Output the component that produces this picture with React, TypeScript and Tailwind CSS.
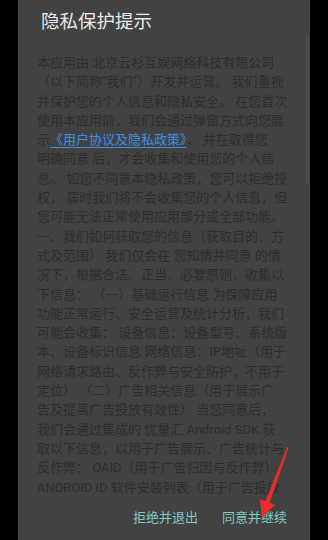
import React from 'react';

const lines: React.ReactNode[] = [
  '本应用由 北京云杉互娱网络科技有限公司',
  '（以下简称“我们”）开发并运营。 我们重视',
  '并保护您的个人信息和隐私安全。 在您首次',
  '使用本应用前，我们会通过弹窗方式向您展',
  <>
    示<span className="text-[#3d8fe6] underline underline-offset-[3px]">《用户协议及隐私政策》</span>， 并在取得您
  </>,
  '明确同意 后，才会收集和使用您的个人信',
  '息。 如您不同意本隐私政策，您可以拒绝授',
  '权， 届时我们将不会收集您的个人信息，但',
  '您可能无法正常使用应用部分或全部功能。',
  '一、我们如何获取您的信息（获取目的、方',
  '式及范围） 我们仅会在 您知情并同意 的情',
  '况下，根据合法、正当、必要原则，收集以',
  '下信息： （一）基础运行信息 为保障应用',
  '功能正常运行、安全运营及统计分析，我们',
  '可能会收集： 设备信息：设备型号、系统版',
  '本、设备标识信息 网络信息：IP地址（用于',
  '网络请求路由、反作弊与安全防护，不用于',
  '定位） （二）广告相关信息（用于展示广',
  '告及提高广告投放有效性） 当您同意后，',
  '我们会通过集成的 优量汇 Android SDK 获',
  '取以下信息，以用于广告展示、广告统计与',
  '反作弊： OAID（用于广告归因与反作弊）',
  'ANDROID ID 软件安装列表（用于广告投放',
];

export default function App() {
  return (
    <div
      className="relative w-[328px] h-[540px] bg-black overflow-hidden"
      style={{ fontFamily: 'Roboto, "Noto Sans CJK SC", sans-serif' }}
    >
      <div className="mx-[18px] h-full bg-[#424242] flex flex-col">
        <div className="pl-[23px] pt-[10px] h-[35px] text-[18.5px] leading-[24px] text-[#e8e8e8]">
          隐私保护提示
        </div>
        <div className="relative flex-1 overflow-hidden">
          <div className="pl-[19px] pt-[18px] text-[13px] leading-[19.3px] text-[#2c2c2c]">
            {lines.map((line, i) => (
              <div key={i} className="whitespace-nowrap">
                {line}
              </div>
            ))}
          </div>
          <div className="absolute right-[1px] top-0 w-[3px] h-[148px] bg-[#4d4d4d]" />
        </div>
        <div className="h-[43px] flex items-center justify-end gap-[24px] pr-[23px] pb-[1px] text-[13px] text-[#80cbc4]">
          <span>拒绝并退出</span>
          <span>同意并继续</span>
        </div>
      </div>
      <svg className="absolute left-0 top-0 pointer-events-none" width="328" height="540" viewBox="0 0 328 540">
        <polygon
          points="287.3,446.7 288.8,447.3 269.6,502.8 275,504.8 262,518 260,499.2 265.4,501.2"
          fill="#ee2b2b"
        />
      </svg>
    </div>
  );
}
